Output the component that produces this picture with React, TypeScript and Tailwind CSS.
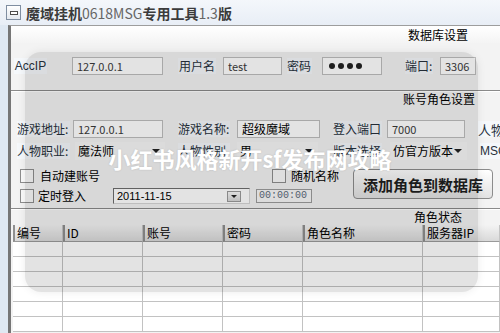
import React from 'react';

type Props = { className?: string; children?: React.ReactNode };

const cjk = "font-['Noto_Sans_CJK_SC','Noto_Sans',sans-serif]";

function Lbl({ className = '', children }: Props) {
  return (
    <div className={`flex h-[16px] shrink-0 items-center overflow-hidden bg-[#f5f8fb] text-[12px] leading-none text-[#27313c] ${className}`}>
      {children}
    </div>
  );
}

function Field({ className = '', children }: Props) {
  return (
    <div className={`flex h-[18px] shrink-0 items-center border border-[#bdbdbd] bg-white pl-[4px] text-[11px] leading-none text-[#3a3a3a] ${className}`}>
      {children}
    </div>
  );
}

function Combo({ className = '', children }: Props) {
  return (
    <div className={`flex h-[18px] shrink-0 items-center justify-between bg-[#f7f7f7] pl-[3px] pr-[5px] text-[12px] leading-none text-black ${className}`}>
      <span>{children}</span>
      <span className="h-0 w-0 shrink-0 border-x-[4px] border-t-[4px] border-x-transparent border-t-[#222]" />
    </div>
  );
}

function Check({ className = '' }: Props) {
  return <div className={`h-[14px] w-[14px] shrink-0 border border-[#8e8e8e] bg-[#fafafa] ${className}`} />;
}

function Section({ className = '', children }: Props) {
  return (
    <div className={`flex items-center justify-end text-[12px] leading-none text-black ${className}`}>{children}</div>
  );
}

const cols = ['编号', 'ID', '账号', '密码', '角色名称', '服务器IP'];

export default function App() {
  return (
    <div className={`relative h-[333px] w-[500px] overflow-hidden whitespace-nowrap bg-[#dfe8f2] ${cjk}`}>
      {/* title bar */}
      <div className="flex h-[25px] items-center bg-gradient-to-b from-[#f4f7fb] to-[#e8eef6] pl-[6px]">
        <div className="flex h-[15px] w-[15px] items-center justify-center border border-[#7f8ea1] bg-gradient-to-b from-white to-[#e4e9ef]">
          <div className="h-[4px] w-[8px] border border-[#4d4d4d] bg-white" />
        </div>
        <span className="ml-[5px] text-[14px] font-bold leading-none text-[#3b3b3b]">
          魔域挂机<span className="font-normal text-[#666]">0618MSG</span>专用工具<span className="font-normal text-[#666]">1.3</span>版
        </span>
      </div>

      <div className="flex h-[308px]">
        <div className="w-[8px] shrink-0" />
        <div className="flex min-w-0 flex-1 flex-col overflow-hidden border-l-[3px] border-t border-l-[#767676] border-t-[#9d9d9d] bg-[#f3f3f3]">
          <Section className="h-[17px] bg-gradient-to-b from-white to-[#f4f4f4] pr-[32px]">数据库设置</Section>

          {/* db row */}
          <div className="mt-[14px] flex h-[18px] items-center">
            <Lbl className="ml-[3px] w-[33px] justify-center bg-[#dde6ee] font-['Liberation_Sans',sans-serif] text-[11px] text-[#4d6c8c]">AccIP</Lbl>
            <Field className="ml-[25px] w-[91px]">127.0.0.1</Field>
            <Lbl className="ml-[15px] w-[38px] justify-center">用户名</Lbl>
            <Field className="ml-[7px] w-[59px]">test</Field>
            <Lbl className="ml-[5px] w-[25px]">密码</Lbl>
            <Field className="ml-[10px] w-[60px] gap-[3px] pl-[6px]">
              <span className="h-[6px] w-[6px] rounded-full bg-[#222]" />
              <span className="h-[6px] w-[6px] rounded-full bg-[#222]" />
              <span className="h-[6px] w-[6px] rounded-full bg-[#222]" />
              <span className="h-[6px] w-[6px] rounded-full bg-[#222]" />
            </Field>
            <Lbl className="ml-[23px] w-[28px]">端口:</Lbl>
            <Field className="ml-[7px] w-[36px]">3306</Field>
          </div>

          <div className="mt-[15px] h-[2px] border-t border-b border-t-[#8a8a8a] border-b-white" />
          <Section className="h-[13px] pr-[25px]">账号角色设置</Section>

          {/* role rows */}
          <div className="mt-[15px] flex h-[18px] items-center">
            <Lbl className="ml-[6px] w-[53px]">游戏地址:</Lbl>
            <Field className="ml-[3px] w-[90px]">127.0.0.1</Field>
            <Lbl className="ml-[15px] w-[52px]">游戏名称:</Lbl>
            <Field className="ml-[7px] w-[83px] text-[12px] text-black">超级魔域</Field>
            <Lbl className="ml-[13px] w-[49px]">登入端口</Lbl>
            <Field className="ml-[5px] w-[78px]">7000</Field>
            <Lbl className="ml-[13px] w-[40px] text-[13px]">人物</Lbl>
          </div>
          <div className="mt-[4px] flex h-[18px] items-center">
            <Lbl className="ml-[6px] w-[53px]">人物职业:</Lbl>
            <Combo className="ml-[5px] w-[90px]">魔法师</Combo>
            <Lbl className="ml-[13px] w-[52px]">人物性别</Lbl>
            <Combo className="ml-[7px] w-[81px]">男</Combo>
            <Lbl className="ml-[15px] w-[49px]">版本选择</Lbl>
            <Combo className="ml-[8px] w-[77px]">仿官方版本</Combo>
            <Lbl className="ml-[13px] w-[40px] bg-[#e3ebf3] font-['Liberation_Sans',sans-serif] text-[10px] text-[#6d86a0]">MSG</Lbl>
          </div>

          {/* options + button */}
          <div className="flex h-[48px]">
            <div className="flex w-[342px] shrink-0 flex-col pt-[7px]">
              <div className="flex h-[18px] items-center">
                <Check className="ml-[9px]" />
                <span className="ml-[6px] w-[232px] text-[12px] leading-none">自动建账号</span>
                <Check />
                <span className="ml-[5px] text-[12px] leading-none">随机名称</span>
              </div>
              <div className="mt-[2px] flex h-[18px] items-center">
                <Check className="ml-[9px]" />
                <span className="ml-[4px] w-[75px] text-[12px] leading-none">定时登入</span>
                <div className="flex h-[16px] w-[137px] items-center justify-between border border-t-[#6e6e6e] border-l-[#6e6e6e] border-r-[#d6d6d6] border-b-[#d6d6d6] bg-white pl-[3px] pr-[8px]">
                  <span className="font-['Liberation_Sans',sans-serif] text-[11px] leading-none text-black">2011-11-15</span>
                  <div className="flex h-[11px] w-[14px] items-center justify-center border border-[#9a9a9a] bg-gradient-to-b from-[#f8f8f8] to-[#d8d8d8]">
                    <span className="h-0 w-0 border-x-[3px] border-t-[3px] border-x-transparent border-t-[#222]" />
                  </div>
                </div>
                <div className="ml-[6px] flex h-[14px] w-[56px] items-center border border-[#9d9d9d] bg-[#f8f8f8] pl-[2px] font-['Liberation_Mono',monospace] text-[10px] leading-none text-[#5b6b7b]">
                  00:00:00
                </div>
              </div>
            </div>
            <div className="mt-[9px] flex h-[30px] w-[140px] shrink-0 items-center justify-center rounded-[4px] border border-[#8c8c8c] bg-gradient-to-b from-white to-[#e2e2e2] text-[15px] font-bold leading-none text-[#1f1f1f]">
              添加角色到数据库
            </div>
          </div>

          <div className="h-[2px] border-t border-b border-t-[#8a8a8a] border-b-white" />
          <Section className="h-[14px] pr-[38px]">角色状态</Section>

          {/* table */}
          <div className="ml-[2px] mt-[1px] grid grid-cols-[50px_80px_80px_80px_120px_1fr] bg-white">
            {cols.map((c) => (
              <div
                key={c}
                className="flex h-[17px] items-center border-b border-l-2 border-r border-b-[#9a9a9a] border-l-[#8f8f8f] border-r-[#c4c4c4] bg-gradient-to-b from-[#f3f3f3] to-[#d9d9d9] pl-[2px] text-[12px] leading-none text-black"
              >
                {c}
              </div>
            ))}
            {Array.from({ length: 36 }).map((_, i) => (
              <div key={i} className="h-[15px] border-b border-r border-[#c2c2c2] bg-white" />
            ))}
          </div>
        </div>
      </div>

      {/* translucent overlay card */}
      <div className="absolute left-[25px] top-[52px] h-[240px] w-[453px] rounded-[16px] bg-black/[0.11] shadow-[0_0_8px_rgba(0,0,0,0.08)]" />

      {/* watermark */}
      <div className="absolute left-0 right-0 top-[147px] text-center text-[22px] font-bold leading-none text-white [text-shadow:0_0_2px_rgba(0,0,0,0.15)]">
        小红书风格新开sf发布网攻略
      </div>
    </div>
  );
}
